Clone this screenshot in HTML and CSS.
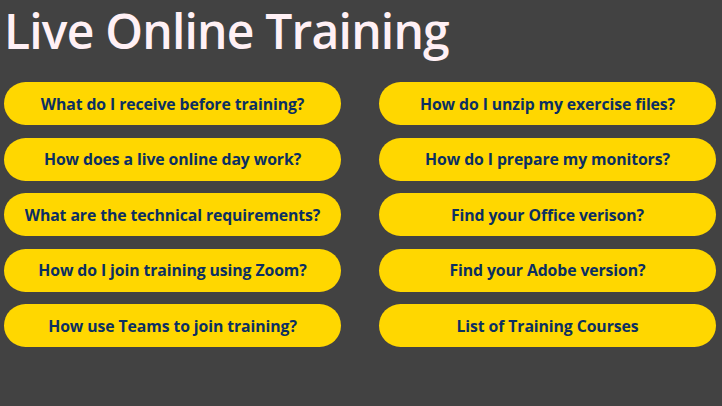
FILE: index.html
```html
<!DOCTYPE html>
<html>
<head>
<meta charset="utf-8">
<link rel="stylesheet" href="styles.css">
</head>
<body>
<h1 class="title">Live Online Training</h1>
<div class="grid">
  <a class="btn">What do I receive before training?</a>
  <a class="btn">How do I unzip my exercise files?</a>
  <a class="btn">How does a live online day work?</a>
  <a class="btn">How do I prepare my monitors?</a>
  <a class="btn">What are the technical requirements?</a>
  <a class="btn">Find your Office verison?</a>
  <a class="btn">How do I join training using Zoom?</a>
  <a class="btn">Find your Adobe version?</a>
  <a class="btn">How use Teams to join training?</a>
  <a class="btn">List of Training Courses</a>
</div>
</body>
</html>
```
FILE: styles.css
```css
html, body {
  margin: 0;
  background: #424242;
}
body {
  padding: 0 4px;
  font-family: "Open Sans", "Noto Sans", sans-serif;
}
.title {
  margin: 0 0 22px;
  padding: 1px 0 0 0;
  font-size: 48px;
  font-weight: 600;
  line-height: 59px;
  color: #fff0f5;
  letter-spacing: -0.8px;
}
.grid {
  display: grid;
  grid-template-columns: 337px 337px;
  column-gap: 38px;
  row-gap: 12.5px;
}
.btn {
  display: flex;
  align-items: center;
  justify-content: center;
  height: 43px;
  border-radius: 22px;
  background: #ffd700;
  color: #0b2f62;
  font-weight: 700;
  font-size: 15.8px;
  letter-spacing: -0.1px;
  text-decoration: none;
}
```
